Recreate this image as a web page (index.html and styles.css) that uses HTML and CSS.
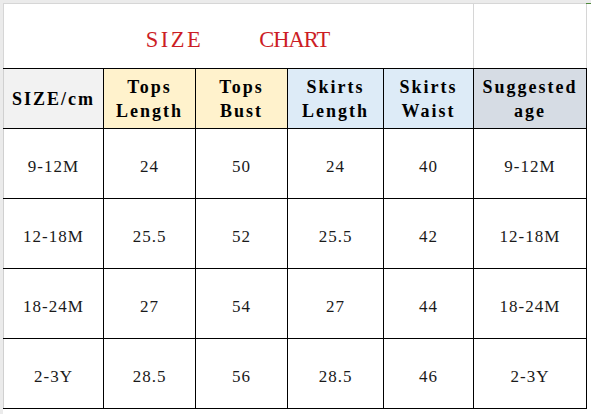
FILE: index.html
```html
<!DOCTYPE html>
<html>
<head>
<meta charset="utf-8">
<link rel="stylesheet" href="styles.css">
</head>
<body>
<div class="sheet">
  <table class="chart">
    <colgroup>
      <col class="c0"><col class="c1"><col class="c2"><col class="c3"><col class="c4"><col class="c5">
    </colgroup>
    <tr class="title-row">
      <td class="title" colspan="5"><div class="title-text"><span class="w1">SIZE</span><span class="w2">CHART</span></div></td>
      <td class="title-end"></td>
    </tr>
    <tr class="head-row">
      <th class="h-size">SIZE/cm</th>
      <th class="h-tops">Tops<br>Length</th>
      <th class="h-tops">Tops<br>Bust</th>
      <th class="h-skirt">Skirts<br>Length</th>
      <th class="h-skirt">Skirts<br>Waist</th>
      <th class="h-age">Suggested<br>age</th>
    </tr>
    <tr class="data-row"><td>9-12M</td><td>24</td><td>50</td><td>24</td><td>40</td><td>9-12M</td></tr>
    <tr class="data-row"><td>12-18M</td><td>25.5</td><td>52</td><td>25.5</td><td>42</td><td>12-18M</td></tr>
    <tr class="data-row"><td>18-24M</td><td>27</td><td>54</td><td>27</td><td>44</td><td>18-24M</td></tr>
    <tr class="data-row"><td>2-3Y</td><td>28.5</td><td>56</td><td>28.5</td><td>46</td><td>2-3Y</td></tr>
  </table>
  <div class="corner-mark"></div>
</div>
</body>
</html>
```

FILE: styles.css
```css
html, body {
  margin: 0;
  padding: 0;
  background: #ffffff;
}

.sheet {
  position: relative;
  width: 591px;
  height: 414px;
  box-sizing: border-box;
  border-top: 3px solid #ebebeb;
  border-left: 3px solid #ebebeb;
  background: #ffffff;
  overflow: hidden;
}

.corner-mark {
  position: absolute;
  top: -1px;
  right: 0;
  width: 5px;
  height: 2px;
  background: #4f8a3c;
}

.chart {
  border-collapse: collapse;
  table-layout: fixed;
  font-family: "Liberation Serif", "Times New Roman", serif;
  color: #111;
}

.c0 { width: 100px; }
.c1 { width: 92px; }
.c2 { width: 92px; }
.c3 { width: 96px; }
.c4 { width: 90px; }
.c5 { width: 113px; }

.chart td, .chart th {
  padding: 0;
  text-align: center;
  vertical-align: middle;
  border: 1px solid #000;
}

.title-row td {
  height: 56px;
  padding-top: 8px;
  border-top: 1px solid #d6d6d6;
  border-left: 1px solid #d6d6d6;
  border-right: 1px solid #d6d6d6;
  border-bottom: 1px solid #000;
}

.title-text {
  display: flex;
  justify-content: center;
  gap: 56px;
  color: #cc1d25;
  font-size: 22.5px;
  padding-right: 2px;
}

.title-text .w1 { letter-spacing: 2.5px; }
.title-text .w2 { letter-spacing: -1px; }

.head-row th {
  height: 59px;
  font-size: 18px;
  font-weight: bold;
  line-height: 24px;
  letter-spacing: 2px;
  color: #000;
}

.head-row .h-size {
  border-left: 1px solid #d0d0d0;
  background: #f2f2f2;
}
.h-tops { background: #fff2cc; }
.h-skirt { background: #ddebf7; }
.h-age { background: #d6dce4; }

.data-row td {
  height: 63px;
  padding-top: 6px;
  font-size: 17px;
  letter-spacing: 1px;
  color: #1a1a1a;
}

.data-row td:first-child {
  border-left: 1px solid #d0d0d0;
}
```
